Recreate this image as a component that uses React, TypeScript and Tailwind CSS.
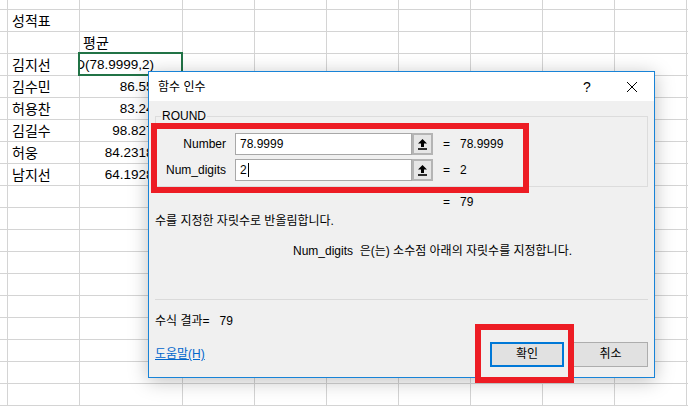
import React from "react";

// 시트 데이터: [A열, B열]
const sheet: [string, string][] = [
  ["성적표", ""],
  ["", "평균"],
  ["김지선", "__edit"],
  ["김수민", "86.55556"],
  ["허용찬", "83.24444"],
  ["김길수", "98.827273"],
  ["허웅", "84.2318182"],
  ["남지선", "64.1928571"],
];

const TOTAL_ROWS = 19;
const EXTRA_COLS = 8;

const RefButton = () => (
  <div className="w-[21px] h-[22px] border-2 border-[#b4b4b4] bg-[#e6e6e6] flex items-center justify-center">
    <svg width="9" height="11" viewBox="0 0 9 11">
      <path d="M4.5 0 L9 4.5 H6 V8 H3 V4.5 H0 Z" fill="#000" />
      <rect x="0" y="9.2" width="9" height="1.6" fill="#000" />
    </svg>
  </div>
);

const ArgRow = ({ label, value, result, caret }: { label: string; value: string; result: string; caret?: boolean }) => (
  <div className="flex items-center h-[22px]">
    <span className="w-[70px] text-right">{label}</span>
    <div className="ml-[9px] w-[177px] h-[22px] border border-[#a8a8a8] bg-white pl-[4px] flex items-center">
      <span>{value}</span>
      {caret && <span className="ml-[1px] w-[1px] h-[14px] bg-black" />}
    </div>
    <RefButton />
    <span className="ml-[10px]">=</span>
    <span className="ml-[10px]">{result}</span>
  </div>
);

const Sheet = () => {
  const rows = Array.from({ length: TOTAL_ROWS }, (_, i) => i);
  return (
    <div className="flex flex-col">
      {rows.map((r) => {
        const data = r === 0 ? null : sheet[r - 1];
        return (
          <div key={r} className={r === 0 ? "flex h-[10px]" : "flex h-[22px]"}>
            <div className="w-[8px] shrink-0 border-r border-b border-[#d4d4d4]" />
            <div className="w-[72px] shrink-0 border-r border-b border-[#d4d4d4] flex items-center pl-[4px] text-[14px] leading-none whitespace-nowrap">
              {data ? data[0] : ""}
            </div>
            <div className="relative w-[103px] shrink-0 border-r border-b border-[#d4d4d4] text-[14px] leading-none">
              {data && data[1] === "__edit" ? (
                <>
                  <div className="h-full overflow-hidden flex items-center justify-end pr-[28px] whitespace-nowrap text-[13.5px]">
                    =ROUND(78.9999,2)
                  </div>
                  <div className="absolute left-[-2px] top-[-2px] right-[-1px] bottom-[-1px] border-2 border-[#217346]" />
                </>
              ) : data && /^[0-9.]+$/.test(data[1]) ? (
                <div className="h-full flex items-center justify-end pr-[6px] whitespace-nowrap text-[13.5px]">{data[1]}</div>
              ) : (
                <div className="h-full flex items-center pl-[3px] whitespace-nowrap">{data ? data[1] : ""}</div>
              )}
            </div>
            {Array.from({ length: EXTRA_COLS }, (_, c) => (
              <div key={c} className="w-[72px] shrink-0 border-r border-b border-[#d4d4d4]" />
            ))}
          </div>
        );
      })}
    </div>
  );
};

const Dialog = () => (
  <div className="absolute left-[148px] top-[71px] w-[507px] h-[307px] border border-[#1883d7] bg-[#f0f0f0] shadow-[0_3px_18px_rgba(0,0,0,0.25)] flex flex-col text-[12px] text-black">
    {/* 제목 표시줄 */}
    <div className="h-[29px] shrink-0 bg-white flex items-center pl-[9px] pr-[14px]">
      <span>함수 인수</span>
      <span className="ml-auto w-[16px] text-center text-[14px] leading-none">?</span>
      <span className="ml-[29px] w-[16px] flex justify-center">
        <svg width="10" height="10" viewBox="0 0 10 10">
          <path d="M0 0 L10 10 M10 0 L0 10" stroke="#000" strokeWidth="1" />
        </svg>
      </span>
    </div>

    <div className="flex-1 flex flex-col px-[6px] leading-[15px]">
      {/* ROUND 그룹 */}
      <div className="relative mt-[15px] h-[71px] border border-[#dcdcdc] pt-[16px] pb-[5px] flex flex-col gap-[4px]">
        <span className="absolute -top-[8px] left-[5px] bg-[#f0f0f0] px-[1px]">ROUND</span>
        <ArgRow label="Number" value="78.9999" result="78.9999" />
        <ArgRow label="Num_digits" value="2" result="2" caret />
      </div>

      <div className="mt-[8px] ml-[288px] flex">
        <span>=</span>
        <span className="ml-[10px]">79</span>
      </div>

      <div className="mt-[4px]">수를 지정한 자릿수로 반올림합니다.</div>
      <div className="mt-[15px] ml-[138px] whitespace-pre">Num_digits  은(는) 소수점 아래의 자릿수를 지정합니다.</div>

      <div className="mt-[40px] border-t border-[#dadada]" />

      <div className="mt-[14px] flex">
        <span>수식 결과=</span>
        <span className="ml-[10px]">79</span>
      </div>

      <div className="mt-[13px] flex items-center h-[25px]">
        <span className="text-[#0066cc] underline">도움말(H)</span>
        <button className="ml-auto w-[74px] h-[25px] border-2 border-[#0078d7] bg-[#e1e1e1]">확인</button>
        <button className="ml-[9px] w-[75px] h-[25px] border border-[#adadad] bg-[#e1e1e1]">취소</button>
      </div>
    </div>
  </div>
);

export default function App() {
  return (
    <div className="relative w-[688px] h-[412px] overflow-hidden bg-white text-black font-['Liberation_Sans','Noto_Sans_CJK_KR',sans-serif]">
      <Sheet />
      <Dialog />
      {/* 빨간 강조 상자 */}
      <div className="absolute left-[151px] top-[123px] w-[378px] h-[70px] border-[6px] border-[#ed1c24]" />
      <div className="absolute left-[475px] top-[324px] w-[99px] h-[59px] border-[6px] border-[#ed1c24]" />
    </div>
  );
}
